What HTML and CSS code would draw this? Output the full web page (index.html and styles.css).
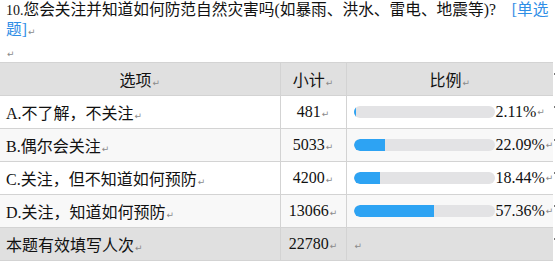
FILE: index.html
```html
<!DOCTYPE html>
<html>
<head>
<meta charset="utf-8">
<link rel="stylesheet" href="styles.css">
</head>
<body>
<div class="question">
  <p class="title"><span class="num">10.</span>您会关注并知道如何防范自然灾害吗(如暴雨、洪水、雷电、地震等)?<span class="type">[单选<br>题]</span><span class="pm">↵</span></p>
  <p class="blank"><span class="pm">↵</span></p>
</div>
<table class="stats">
  <colgroup><col class="c1"><col class="c2"><col class="c3"></colgroup>
  <thead>
    <tr class="head">
      <th>选项<span class="pm">↵</span></th>
      <th>小计<span class="pm">↵</span></th>
      <th class="last">比例<span class="pm">↵</span></th>
    </tr>
  </thead>
  <tbody>
    <tr class="odd">
      <td class="opt">A.不了解，不关注<span class="pm">↵</span></td>
      <td class="cnt">481<span class="pm">↵</span></td>
      <td class="last"><div class="ratio"><span class="bar"><span class="fill" style="width:2.11%"></span></span><span class="pct">2.11%</span><span class="pm">↵</span></div></td>
    </tr>
    <tr class="even">
      <td class="opt">B.偶尔会关注<span class="pm">↵</span></td>
      <td class="cnt">5033<span class="pm">↵</span></td>
      <td class="last"><div class="ratio"><span class="bar"><span class="fill" style="width:22.09%"></span></span><span class="pct">22.09%</span><span class="pm">↵</span></div></td>
    </tr>
    <tr class="odd">
      <td class="opt">C.关注，但不知道如何预防<span class="pm">↵</span></td>
      <td class="cnt">4200<span class="pm">↵</span></td>
      <td class="last"><div class="ratio"><span class="bar"><span class="fill" style="width:18.44%"></span></span><span class="pct">18.44%</span><span class="pm">↵</span></div></td>
    </tr>
    <tr class="even">
      <td class="opt">D.关注，知道如何预防<span class="pm">↵</span></td>
      <td class="cnt">13066<span class="pm">↵</span></td>
      <td class="last"><div class="ratio"><span class="bar"><span class="fill" style="width:57.36%"></span></span><span class="pct">57.36%</span><span class="pm">↵</span></div></td>
    </tr>
    <tr class="total">
      <td class="opt">本题有效填写人次<span class="pm">↵</span></td>
      <td class="cnt">22780<span class="pm">↵</span></td>
      <td class="last"><span class="pm">↵</span></td>
    </tr>
  </tbody>
</table>
</body>
</html>
```

FILE: styles.css
```css
html, body {
  margin: 0;
  padding: 0;
  background: #ffffff;
}
body {
  font-family: "Liberation Serif", "Noto Sans CJK SC", serif;
  font-size: 16px;
  color: #111;
  width: 555px;
  overflow: hidden;
}
.question {
  padding: 0 0 0 6px;
}
.question p {
  margin: 0;
  line-height: 19px;
  white-space: nowrap;
}
.title {
  font-size: 15.7px;
}
.num {
  font-size: 14px;
}
.type {
  color: #2f8ee6;
  margin-left: 16px;
}
.pm {
  font-family: "DejaVu Sans", sans-serif;
  font-size: 9px;
  color: #8a8a8a;
  margin-left: 1px;
}
.blank {
  height: 20px;
}
.stats {
  border-collapse: collapse;
  table-layout: fixed;
  width: 553px;
  margin-top: 0;
}
.c1 { width: 280px; }
.c2 { width: 66px; }
.c3 { width: 207px; }
.stats th, .stats td {
  border-top: 1px solid #d3d3d3;
  border-bottom: 1px solid #d3d3d3;
  height: 32px;
  padding: 0;
  vertical-align: middle;
  white-space: nowrap;
}
.stats th {
  font-weight: normal;
  text-align: center;
}
.stats th + th, .stats td + td {
  border-left: 1px solid #d3d3d3;
}
.head { background: #e0e0e0; }
.odd { background: #ffffff; }
.even { background: #f8f8f8; }
.total { background: #e0e0e0; }
.opt {
  padding-left: 6px !important;
}
.cnt {
  text-align: center;
}
.last {
  position: relative;
  padding-left: 7px !important;
}
.stats th.last {
  padding-left: 0 !important;
}
.last::after {
  content: "";
  position: absolute;
  right: -2px;
  top: 10px;
  width: 1px;
  height: 2px;
  background: #777;
}
.ratio {
  display: flex;
  align-items: center;
}
.bar {
  display: block;
  width: 141px;
  height: 12px;
  border-radius: 6px;
  background: #e3e3e5;
  overflow: hidden;
  flex: none;
}
.fill {
  display: block;
  height: 100%;
  background: #2da3f3;
  border-radius: 6px 0 0 6px;
}
.pct {
  margin-left: 1px;
}
```
